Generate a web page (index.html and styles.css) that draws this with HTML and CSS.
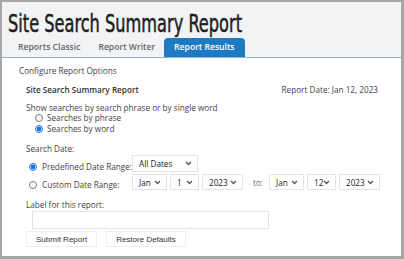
FILE: index.html
```html
<!DOCTYPE html>
<html lang="en">
<head>
    <meta charset="UTF-8">
    <title>Site Search Summary Report</title>
    <link rel="stylesheet" href="styles.css">
</head>
<body>
    <div class="frame">
        <div class="header">
            <h1>Site Search Summary Report</h1>
            <div class="tabs">
                <a class="tab">Reports Classic</a>
                <a class="tab">Report Writer</a>
                <a class="tab active">Report Results</a>
            </div>
        </div>

        <div class="content">
            <div class="section-title">Configure Report Options</div>

            <div class="options">
                <div class="report-head">
                    <span class="report-name">Site Search Summary Report</span>
                    <span class="report-date">Report Date: Jan 12, 2023</span>
                </div>

                <div class="field-label">Show searches by search phrase or by single word</div>
                <div class="radio-list">
                    <label><input type="radio" name="mode"> Searches by phrase</label>
                    <label><input type="radio" name="mode" checked> Searches by word</label>
                </div>

                <div class="field-label date-label">Search Date:</div>
                <div class="date-grid">
                    <label class="range-label"><input type="radio" name="range" checked> Predefined Date Range:</label>
                    <div class="row">
                        <span class="select wide">All Dates
                            <svg width="7" height="5" viewBox="0 0 7 5"><path d="M1 1l2.5 2.5L6 1" fill="none" stroke="#555" stroke-width="1.3"/></svg>
                        </span>
                    </div>
                    <label class="range-label"><input type="radio" name="range"> Custom Date Range:</label>
                    <div class="row">
                        <span class="select month">Jan
                            <svg width="7" height="5" viewBox="0 0 7 5"><path d="M1 1l2.5 2.5L6 1" fill="none" stroke="#555" stroke-width="1.3"/></svg>
                        </span>
                        <span class="select day">1
                            <svg width="7" height="5" viewBox="0 0 7 5"><path d="M1 1l2.5 2.5L6 1" fill="none" stroke="#555" stroke-width="1.3"/></svg>
                        </span>
                        <span class="select year">2023
                            <svg width="7" height="5" viewBox="0 0 7 5"><path d="M1 1l2.5 2.5L6 1" fill="none" stroke="#555" stroke-width="1.3"/></svg>
                        </span>
                        <span class="to">to:</span>
                        <span class="select month">Jan
                            <svg width="7" height="5" viewBox="0 0 7 5"><path d="M1 1l2.5 2.5L6 1" fill="none" stroke="#555" stroke-width="1.3"/></svg>
                        </span>
                        <span class="select day">12
                            <svg width="7" height="5" viewBox="0 0 7 5"><path d="M1 1l2.5 2.5L6 1" fill="none" stroke="#555" stroke-width="1.3"/></svg>
                        </span>
                        <span class="select year">2023
                            <svg width="7" height="5" viewBox="0 0 7 5"><path d="M1 1l2.5 2.5L6 1" fill="none" stroke="#555" stroke-width="1.3"/></svg>
                        </span>
                    </div>
                </div>

                <div class="field-label label-title">Label for this report:</div>
                <input class="label-input" type="text">

                <div class="buttons">
                    <button>Submit Report</button>
                    <button>Restore Defaults</button>
                </div>
            </div>
        </div>
    </div>
</body>
</html>
```

FILE: styles.css
```css
body {
    margin: 0;
    font-family: 'Open Sans', sans-serif;
    color: #444;
}

.frame {
    width: 404px;
    height: 259px;
    box-sizing: border-box;
    border: 2px solid #a6a6a6;
    border-right-width: 3px;
    border-bottom-width: 3px;
    background: #fff;
    overflow: hidden;
}

.header {
    background: #f2f3f5;
    border-bottom: 1px solid #8fb5d3;
    padding-left: 6px;
}

h1 {
    margin: 0;
    padding-top: 7px;
    height: 29px;
    font-family: 'DejaVu Sans Condensed', 'Liberation Sans Narrow', sans-serif;
    font-weight: normal;
    font-size: 25px;
    line-height: 29px;
    color: #1e1e1e;
    -webkit-text-stroke: 0.5px #1e1e1e;
    white-space: nowrap;
    transform: scaleX(0.72);
    transform-origin: left center;
}

.tabs {
    display: flex;
    height: 19px;
    padding-left: 1px;
}

.tab {
    padding: 0 9px;
    font-size: 8.6px;
    font-weight: 600;
    color: #666;
    line-height: 19px;
}

.tab.active {
    padding: 0 10px;
    background: #1f7bc1;
    color: #fff;
    border-radius: 4px 4px 0 0;
}

.content {
    padding: 6px 0 0 17px;
    font-size: 8.2px;
}

.section-title {
    line-height: 13px;
}

.options {
    padding: 6px 23px 0 7px;
}

.report-head {
    display: flex;
    justify-content: space-between;
    line-height: 13px;
}

.report-name {
    font-weight: 600;
    color: #333;
}

.field-label {
    margin-top: 5px;
    line-height: 13px;
}

.radio-list {
    display: flex;
    flex-direction: column;
    margin-top: -2px;
    padding-left: 7px;
}

.radio-list label,
.range-label {
    display: flex;
    align-items: center;
    line-height: 11px;
    white-space: nowrap;
}

input[type="radio"] {
    width: 8px;
    height: 8px;
    margin: 0 4px 0 2px;
    accent-color: #1b73e8;
}

.range-label input[type="radio"] {
    margin: 0 5px 0 3px;
}

.date-label {
    margin-top: 9px;
    line-height: 12px;
}

.date-grid {
    display: grid;
    grid-template-columns: 106px auto;
    row-gap: 2px;
}

.range-label {
    align-self: end;
}

.row {
    display: flex;
    align-items: center;
    gap: 3px;
}

.select {
    display: inline-flex;
    align-items: center;
    justify-content: space-between;
    box-sizing: border-box;
    height: 17px;
    padding: 0 5px 0 6px;
    border: 1px solid #e3e3e3;
    background: #fff;
    color: #222;
}

.select svg {
    flex-shrink: 0;
}

.row + .range-label + .row .select {
    height: 16px;
}

.select.wide { width: 66px; }
.select.month { width: 35px; }
.select.day { width: 29px; }
.select.year { width: 41px; }

.to {
    margin: 0 3px 0 7px;
    color: #666;
}

.label-title {
    margin-top: 8px;
}

.label-input {
    display: block;
    box-sizing: border-box;
    width: 237px;
    height: 18px;
    margin: 0 0 0 6px;
    border: 1px solid #e3e3e3;
}

.buttons {
    display: flex;
    gap: 9px;
    margin-top: 2px;
}

button {
    height: 16px;
    padding: 0 9px;
    border: 1px solid #eee;
    background: #fff;
    font-family: 'Liberation Sans', Arial, sans-serif;
    font-size: 8px;
    color: #333;
}
```
